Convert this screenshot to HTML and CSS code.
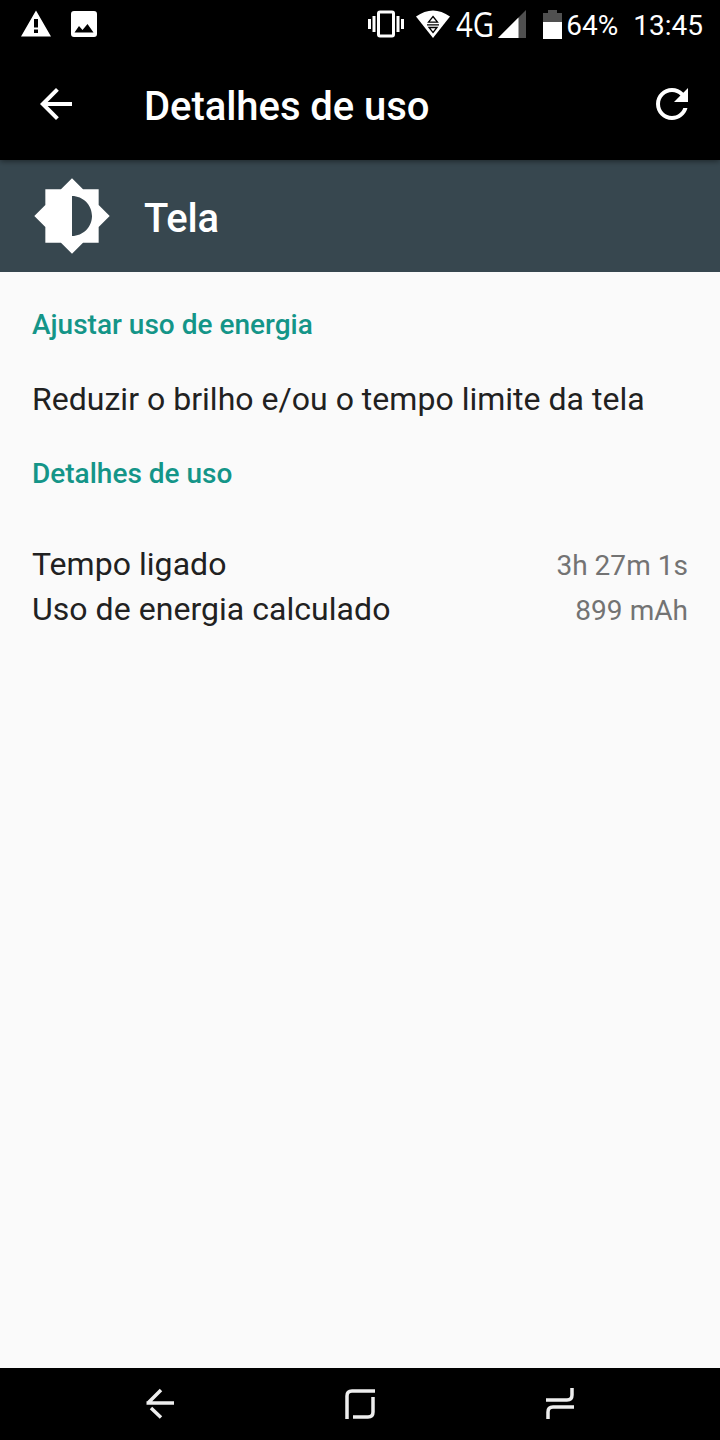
FILE: index.html
```html
<!DOCTYPE html>
<html lang="pt-BR">
<head>
  <meta charset="UTF-8" />
  <meta name="viewport" content="width=device-width, initial-scale=1.0" />
  <title>Detalhes de uso</title>
  <link rel="stylesheet" href="styles.css">
</head>
<body>
  <div class="statusbar">
    <div class="notifications">
      <svg width="32" height="32" viewBox="0 0 32 32">
        <path fill="#fff" fill-rule="evenodd" d="M16 2.500L31 28.500H1zM14 11v8.500h4V11zM14 21.500v3.500h4v-3.500z"/>
      </svg>
      <svg width="28" height="28" viewBox="0 0 28 28">
        <path fill="#fff" fill-rule="evenodd" d="M4 1h20a3 3 0 0 1 3 3v20a3 3 0 0 1-3 3H4a3 3 0 0 1-3-3V4a3 3 0 0 1 3-3zM4.500 22.500h19L17.500 14l-5 6-3.500-4z"/>
      </svg>
    </div>
    <div class="system">
      <svg class="vibrate" width="36" height="28" viewBox="0 0 36 28">
        <rect x="10.500" y="2" width="15" height="24" rx="1.500" fill="none" stroke="#fff" stroke-width="3"/>
        <path fill="#fff" d="M0 9h3v10H0zM4.500 6h3v16h-3zM28.500 6h3v16h-3zM33 9h3v10h-3z"/>
      </svg>
      <svg class="wifi" width="36" height="28" viewBox="0 0 36 28">
        <path fill="#fff" d="M1 6.500Q18-5.500 35 6.500L18 28z"/>
        <path fill="none" stroke="#000" stroke-width="1.300" d="M18 6.500l4.500 5.700h-9zM18 22.500l4-5h-8zM12 14.800h12"/>
      </svg>
      <svg class="network" width="40" height="48" viewBox="0 0 40 48">
        <text x="0" y="37" textLength="38" lengthAdjust="spacingAndGlyphs">4G</text>
      </svg>
      <svg class="signal" width="28" height="28" viewBox="0 0 28 28">
        <path fill="#505050" d="M28 0v28H0z"/>
        <path fill="#fff" d="M20.500 7.500V28H0z"/>
      </svg>
      <svg class="battery" width="19" height="29" viewBox="0 0 19 29">
        <path fill="#505050" d="M5 0h9v3h5v10H0V3h5z"/>
        <path fill="#fff" d="M0 12h19v17H0z"/>
      </svg>
      <span class="percent">64%</span>
      <span class="clock">13:45</span>
    </div>
  </div>

  <header class="toolbar">
    <svg width="48" height="48" viewBox="0 0 24 24">
      <path fill="#fff" d="M20 11H7.830l5.590-5.590L12 4l-8 8 8 8 1.410-1.410L7.830 13H20v-2z"/>
    </svg>
    <h1>Detalhes de uso</h1>
    <svg width="48" height="48" viewBox="0 0 24 24">
      <path fill="#fff" d="M17.650 6.350C16.200 4.900 14.210 4 12 4c-4.420 0-7.990 3.580-7.990 8s3.570 8 7.990 8c3.730 0 6.840-2.550 7.730-6h-2.080c-.82 2.330-3.040 4-5.650 4-3.310 0-6-2.690-6-6s2.690-6 6-6c1.660 0 3.140.69 4.220 1.780L13 11h7V4l-2.350 2.350z"/>
    </svg>
  </header>

  <div class="app-header">
    <svg width="80" height="80" viewBox="0 0 24 24">
      <path fill="#fff" d="M20 15.310L23.310 12 20 8.690V4h-4.690L12 .69 8.690 4H4v4.690L.69 12 4 15.310V20h4.690L12 23.310 15.310 20H20v-4.690zM12 18V6c3.310 0 6 2.690 6 6s-2.690 6-6 6z"/>
    </svg>
    <h2>Tela</h2>
  </div>

  <main class="content">
    <h3>Ajustar uso de energia</h3>
    <p class="tip">Reduzir o brilho e/ou o tempo limite da tela</p>
    <h3>Detalhes de uso</h3>
    <div class="details">
      <div class="row"><span>Tempo ligado</span><span class="value">3h 27m 1s</span></div>
      <div class="row"><span>Uso de energia calculado</span><span class="value">899 mAh</span></div>
    </div>
  </main>

  <nav class="navbar">
    <svg width="32" height="32" viewBox="0 0 32 32">
      <path d="M17 2L4.500 14.500M2.500 15H30M7 20l10 9.500"/>
    </svg>
    <svg width="32" height="32" viewBox="0 0 32 32">
      <path d="M3 31V8q0-5 5-5h23M9 29h15q5 0 5-5V9"/>
    </svg>
    <svg width="32" height="32" viewBox="0 0 32 32">
      <path d="M2 12h21q5 0 5-5V0M4 31v-7q0-5 5-5h21"/>
    </svg>
  </nav>
</body>
</html>
```

FILE: styles.css
```css
* { box-sizing: border-box; }
body {
  margin: 0;
  height: 1440px;
  display: flex;
  flex-direction: column;
  background: #fafafa;
  color: #212121;
  font-family: Roboto, "Liberation Sans", sans-serif;
}
h1, h2, h3, p { margin: 0; font-weight: 500; }
svg { display: block; flex: none; }

.statusbar {
  height: 48px;
  padding: 0 17px 0 20px;
  display: flex;
  justify-content: space-between;
  background: #000;
  color: #fff;
  font-size: 28px;
}
.notifications, .system { display: flex; align-items: center; }
.notifications { gap: 18px; }
.vibrate { margin-right: 11px; }
.wifi { margin-right: 5px; }
.network text {
  font-family: "Open Sans", "Noto Sans", sans-serif;
  font-weight: 400;
  font-size: 35px;
  fill: #fff;
}
.network { margin-right: 2px; overflow: visible; }
.signal { margin-right: 17px; }
.battery { margin-right: 4px; }
.percent, .clock { line-height: 45px; padding-top: 3px; }
.clock { margin-left: 15px; }

.toolbar {
  position: relative;
  height: 112px;
  padding: 0 24px 0 32px;
  display: flex;
  align-items: center;
  background: #000;
  color: #fff;
  box-shadow: 0 1px 6px rgba(0, 0, 0, .5);
}
.toolbar h1 { flex: 1; margin-left: 64px; padding-top: 5px; font-size: 40px; letter-spacing: -.05px; }

.app-header {
  height: 112px;
  padding: 0 32px;
  display: flex;
  align-items: center;
  gap: 32px;
  background: #37474f;
  color: #fff;
}
.app-header h2 { padding-top: 4px; font-size: 40px; letter-spacing: -.2px; }

.content { flex: 1; padding: 33px 32px 0; }
.content h3 { color: #149588; font-size: 28px; line-height: 40px; }
.tip { margin: 32px 0; font-size: 32px; font-weight: 400; line-height: 45px; letter-spacing: .02px; }
.details { margin-top: 48px; }
.row {
  height: 45px;
  display: flex;
  justify-content: space-between;
  align-items: baseline;
  font-size: 32px;
  line-height: 45px;
  letter-spacing: .04px;
}
.value { color: #737373; font-size: 28px; }

.navbar {
  height: 72px;
  padding: 0 144px;
  display: flex;
  justify-content: space-between;
  align-items: center;
  background: #000;
}
.navbar path { fill: none; stroke: #eee; stroke-width: 3.5; }
```
